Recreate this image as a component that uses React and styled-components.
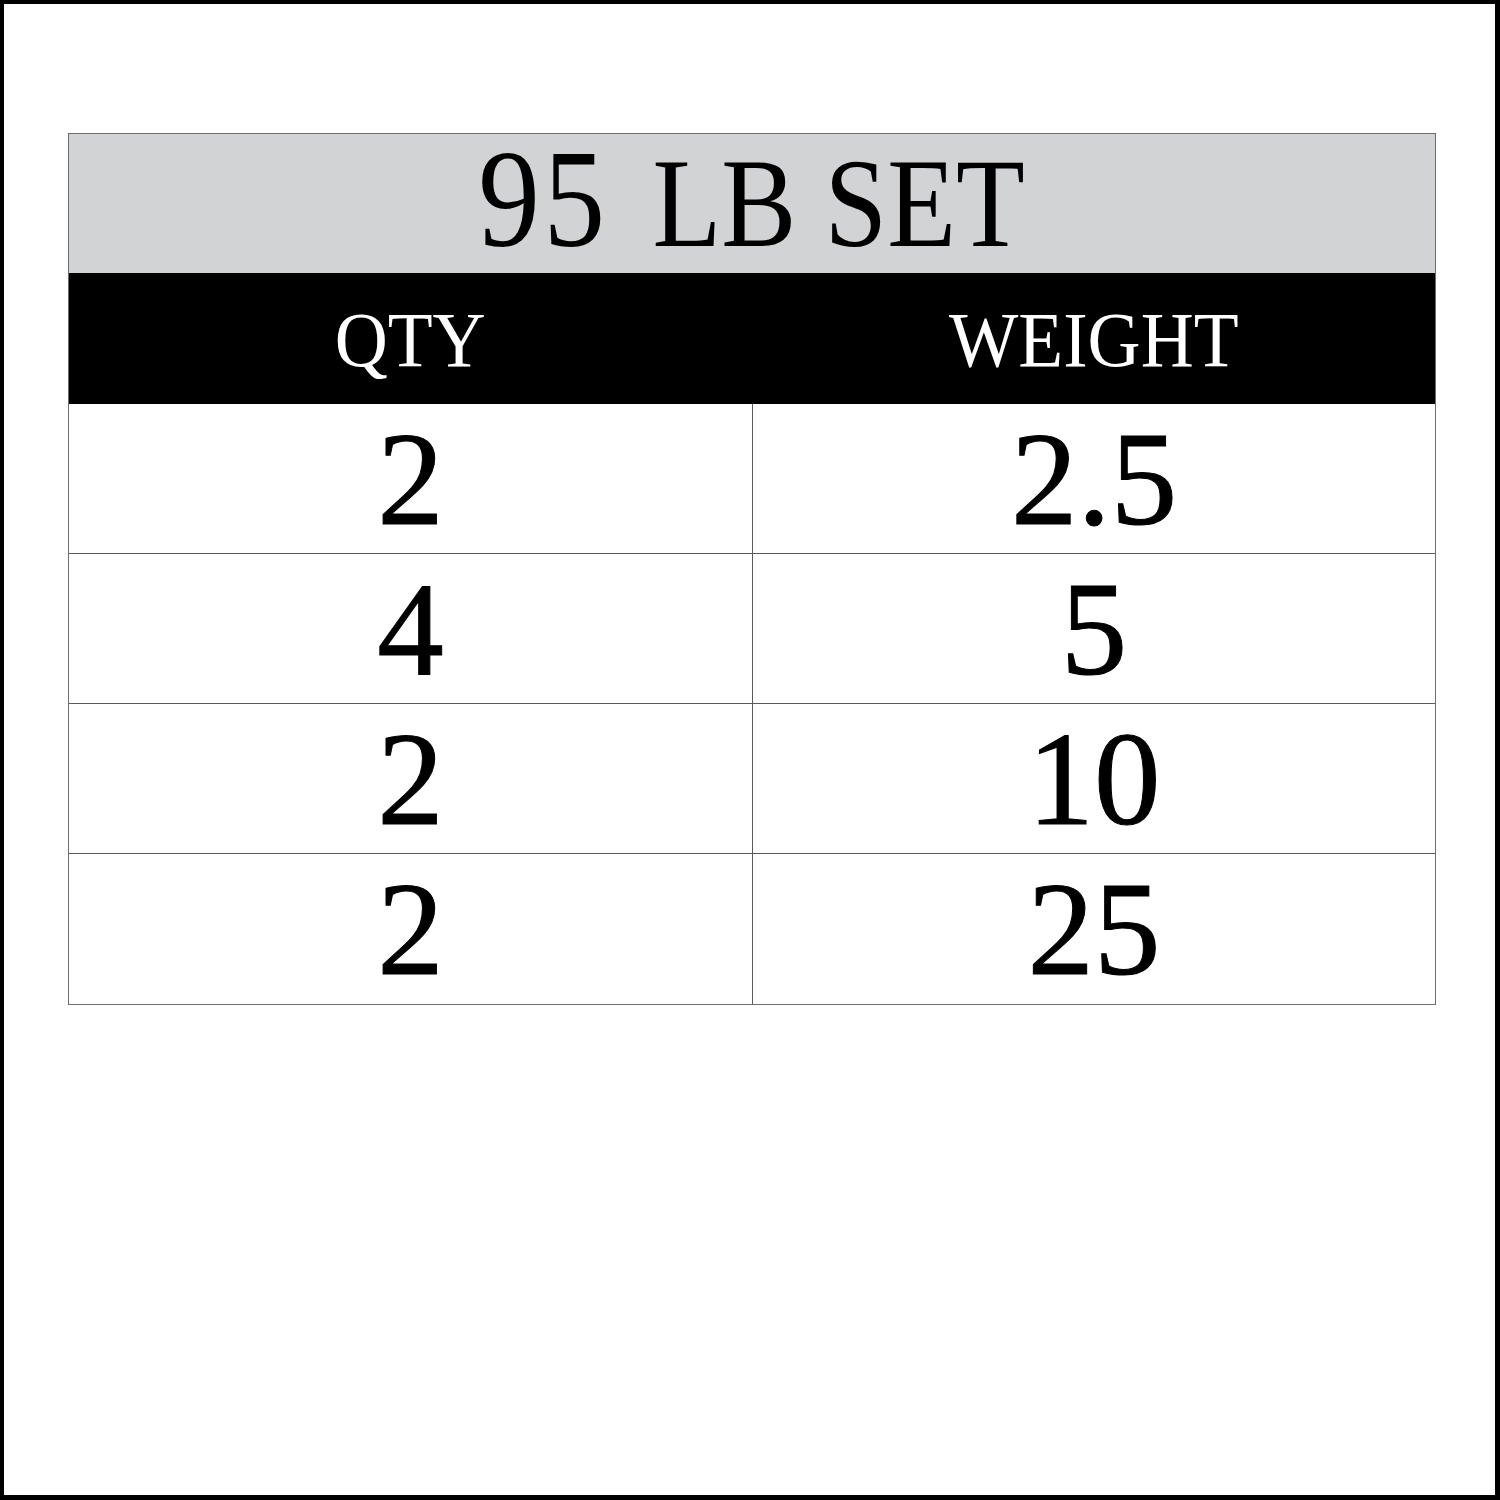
import React from 'react';
import styled, { createGlobalStyle } from 'styled-components';

const GlobalStyle = createGlobalStyle`
  * { box-sizing: border-box; }
  body {
    margin: 0;
    background: #fff;
    font-family: "Liberation Serif", "Times New Roman", serif;
  }
`;

const Page = styled.div`
  width: 1500px;
  height: 1500px;
  border: 4px solid #000;
  border-right-width: 5px;
  border-bottom-width: 5px;
  padding: 129px 0 0 64px;
  background: #fff;
`;

const Table = styled.div`
  width: 1368px;
  border: 1px solid #6d6e71;
  display: flex;
  flex-direction: column;
`;

const TitleBar = styled.div`
  height: 139px;
  background: #d1d3d4;
  display: flex;
  justify-content: center;
  align-items: center;
  color: #000;
`;

const TitleText = styled.div`
  display: flex;
  align-items: baseline;
  gap: 50px;
  transform: scaleX(0.88);
  line-height: 1;
  margin-top: -9px;
`;

const TitlePart = styled.span`
  font-size: ${p => p.$size}px;
  letter-spacing: ${p => p.$track || 0}px;
`;

const HeaderBar = styled.div`
  height: 131px;
  background: #000;
  display: grid;
  grid-template-columns: 1fr 1fr;
`;

const HeaderCell = styled.div`
  display: flex;
  justify-content: center;
  align-items: center;
  padding-top: 1px;
  color: #fff;
  font-size: 79px;
  line-height: 1;
`;

const Squeeze = styled.span`
  display: inline-block;
  transform: scaleX(0.93);
`;

const Row = styled.div`
  height: 150px;
  display: grid;
  grid-template-columns: 1fr 1fr;
  border-bottom: ${p => (p.$last ? 'none' : '1px solid #58595b')};
`;

const Cell = styled.div`
  display: flex;
  justify-content: center;
  align-items: center;
  padding-top: 1px;
  font-size: 133px;
  line-height: 1;
  color: #000;
  -webkit-text-stroke: 1px #000;
  border-left: ${p => (p.$divider ? '1px solid #58595b' : 'none')};
`;

const rows = [
  ['2', '2.5'],
  ['4', '5'],
  ['2', '10'],
  ['2', '25'],
];

export default function App() {
  return (
    <>
      <GlobalStyle />
      <Page>
        <Table>
          <TitleBar>
            <TitleText>
              <TitlePart $size={140} $track={4}>95</TitlePart>
              <TitlePart $size={128}>LB SET</TitlePart>
            </TitleText>
          </TitleBar>
          <HeaderBar>
            <HeaderCell><Squeeze>QTY</Squeeze></HeaderCell>
            <HeaderCell><Squeeze>WEIGHT</Squeeze></HeaderCell>
          </HeaderBar>
          {rows.map(([qty, weight], i) => (
            <Row key={i} $last={i === rows.length - 1}>
              <Cell>{qty}</Cell>
              <Cell $divider>{weight}</Cell>
            </Row>
          ))}
        </Table>
      </Page>
    </>
  );
}
